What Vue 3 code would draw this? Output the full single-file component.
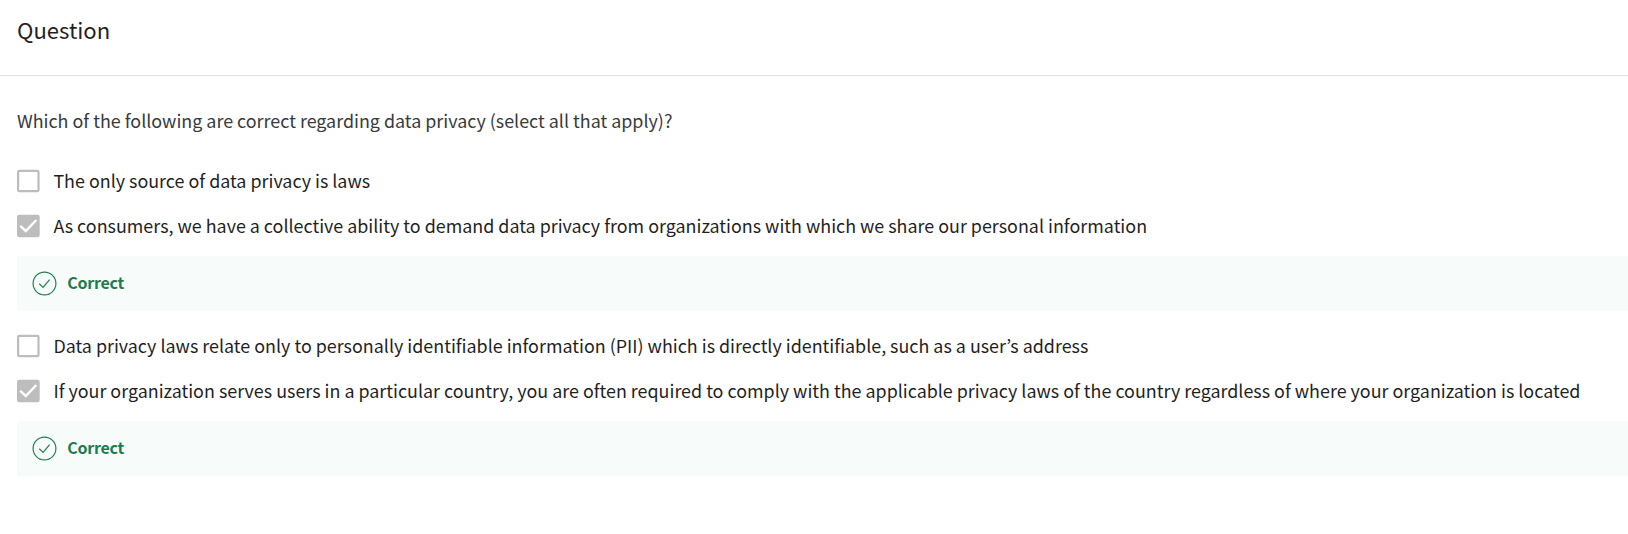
<script setup>
const options = [
  { text: 'The only source of data privacy is laws', checked: false },
  { text: 'As consumers, we have a collective ability to demand data privacy from organizations with which we share our personal information', checked: true },
  { text: 'Data privacy laws relate only to personally identifiable information (PII) which is directly identifiable, such as a user’s address', checked: false },
  { text: 'If your organization serves users in a particular country, you are often required to comply with the applicable privacy laws of the country regardless of where your organization is located', checked: true },
]
</script>

<template>
  <main class="page">
    <header class="header"><h1 class="title">Question</h1></header>
    <section class="body">
      <p class="prompt">Which of the following are correct regarding data privacy (select all that apply)?</p>
      <div v-for="(o, i) in options" :key="i" class="item">
        <div class="option">
          <svg class="box" width="23" height="23" viewBox="0 0.3 23 23">
            <template v-if="o.checked">
              <rect x="0" y="0" width="22.7" height="22.5" rx="2.2" fill="#bdbdbd" />
              <path d="M3.2 11.2 L8.8 16.3 L19.3 5.3" fill="none" stroke="#fff" stroke-width="2.5" />
            </template>
            <rect v-else x="1.1" y="1.1" width="20.4" height="20.3" rx="1.2" fill="#fff" stroke="#bdbdbd" stroke-width="2.2" />
          </svg>
          <span class="label">{{ o.text }}</span>
        </div>
        <div v-if="o.checked" class="feedback">
          <svg width="25" height="25" viewBox="0 0 25 25" fill="none" stroke="#1f8354">
            <circle cx="12.5" cy="12.5" r="11.4" stroke-width="1.2" />
            <path d="M7.3 12.8 L11.1 16.4 L17.6 8.7" stroke-width="1.2" />
          </svg>
          <span class="verdict">Correct</span>
        </div>
      </div>
    </section>
  </main>
</template>

<style>
body { background: #fff; }
</style>

<style scoped>
.page {
  height: 534px;
  overflow: hidden;
  background: #fff;
  color: #1f1f1f;
  font-family: "Noto Sans CJK KR", "Open Sans", sans-serif;
  font-size: 17.9px;
}
.header {
  box-sizing: border-box;
  height: 76px;
  padding: 13px 17px 0;
  border-bottom: 1px solid #e1e1e1;
}
.title { margin: 0; font-size: 22.1px; font-weight: 400; line-height: 32px; }
.body { padding: 29px 0 0 17px; }
.prompt { margin: 0 0 24px; line-height: 30px; color: #373a3c; }
.option { display: flex; align-items: center; height: 45px; white-space: nowrap; }
.box { flex: none; margin-right: 13.4px; overflow: visible; }
.label { line-height: 30px; padding-bottom: 4px; }
.feedback {
  display: flex;
  align-items: center;
  height: 55px;
  margin: 7px 0 13px;
  padding-left: 15px;
  box-sizing: border-box;
  background: #f7fbf9;
}
.verdict {
  margin-left: 10.3px;
  padding-bottom: 3px;
  font-size: 16px;
  font-weight: 700;
  line-height: 30px;
  letter-spacing: -0.28px;
  color: #1d7c50;
}
</style>
